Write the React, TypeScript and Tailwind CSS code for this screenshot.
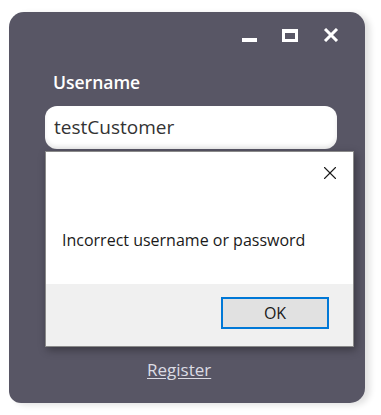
import { X } from "lucide-react";

function TitleButtons() {
  return (
    <div className="flex items-center justify-end gap-[25px] pr-[26px] pt-[16px] h-[30px]">
      {/* minimize */}
      <div className="w-[15px] h-[14px] flex items-end">
        <div className="w-[15px] h-[4px] bg-white" />
      </div>
      {/* maximize */}
      <div className="w-[16px] h-[13px] border-white border-x-[3px] border-t-[4px] border-b-[3px]" />
      {/* close */}
      <svg width="16" height="14" viewBox="0 0 16 14" className="text-white">
        <path d="M2 1 L14 13 M14 1 L2 13" stroke="currentColor" strokeWidth="3" />
      </svg>
    </div>
  );
}

function ErrorDialog() {
  return (
    <div className="absolute left-[45px] top-[151px] w-[309px] h-[196px] border border-[#8a8a8a] bg-white flex flex-col shadow-[2px_3px_8px_rgba(0,0,0,0.35)]">
      <div className="flex-1 flex flex-col">
        <div className="flex justify-end pr-[12px] pt-[10px]">
          <X size={22} strokeWidth={1.2} className="text-[#1a1a1a]" />
        </div>
        <p className="pl-[16px] mt-[44px] text-[16px] text-[#1a1a1a]">Incorrect username or password</p>
      </div>
      <div className="h-[62px] bg-[#f0f0f0] flex justify-end items-start pt-[13px] pr-[24px]">
        <button className="w-[108px] h-[32px] border-2 border-[#0078d7] bg-[#e1e1e1] text-[16px] text-[#1a1a1a]">
          OK
        </button>
      </div>
    </div>
  );
}

export default function App() {
  return (
    <div className="relative w-[381px] h-[415px] bg-white pt-[12px]" style={{ fontFamily: '"Open Sans", "Noto Sans", sans-serif' }}>
      <div className="ml-[9px] w-[356px] h-[391px] rounded-[15px] rounded-bl-[12px] bg-[#585665] shadow-[5px_2px_6px_rgba(0,0,0,0.12)] flex flex-col">
        <TitleButtons />
        <div className="pl-[36px] pr-[28px] flex flex-col">
          <label className="mt-[28px] pl-[8px] text-[17.5px] font-semibold text-white leading-[24px]">Username</label>
          <div className="mt-[12px] h-[43px] rounded-[12px] bg-white flex items-center pl-[9px] shadow-[inset_0_-3px_4px_rgba(0,0,0,0.08)]">
            <span className="text-[19px] text-[#333333]">testCustomer</span>
          </div>
        </div>
        <div className="flex-1" />
        <a href="#" className="pl-[138px] mb-[21px] text-[17px] text-[#dcdce4] underline underline-offset-2">
          Register
        </a>
      </div>
      <ErrorDialog />
    </div>
  );
}
